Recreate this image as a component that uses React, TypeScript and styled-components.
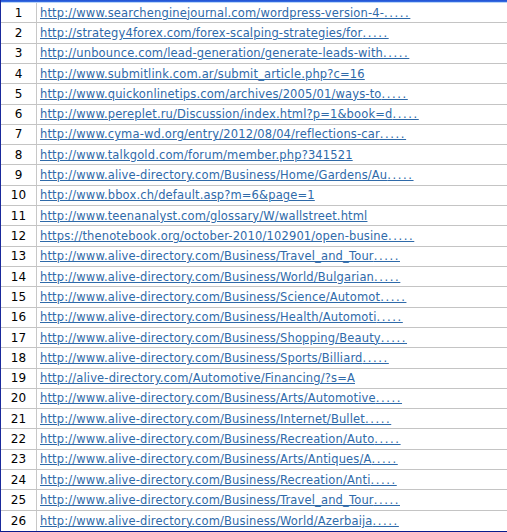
import styled, { createGlobalStyle } from "styled-components";

const LINKS = [
  "http://www.searchenginejournal.com/wordpress-version-4-.....",
  "http://strategy4forex.com/forex-scalping-strategies/for.....",
  "http://unbounce.com/lead-generation/generate-leads-with.....",
  "http://www.submitlink.com.ar/submit_article.php?c=16",
  "http://www.quickonlinetips.com/archives/2005/01/ways-to.....",
  "http://www.pereplet.ru/Discussion/index.html?p=1&book=d.....",
  "http://www.cyma-wd.org/entry/2012/08/04/reflections-car.....",
  "http://www.talkgold.com/forum/member.php?341521",
  "http://www.alive-directory.com/Business/Home/Gardens/Au.....",
  "http://www.bbox.ch/default.asp?m=6&page=1",
  "http://www.teenanalyst.com/glossary/W/wallstreet.html",
  "https://thenotebook.org/october-2010/102901/open-busine.....",
  "http://www.alive-directory.com/Business/Travel_and_Tour.....",
  "http://www.alive-directory.com/Business/World/Bulgarian.....",
  "http://www.alive-directory.com/Business/Science/Automot.....",
  "http://www.alive-directory.com/Business/Health/Automoti.....",
  "http://www.alive-directory.com/Business/Shopping/Beauty.....",
  "http://www.alive-directory.com/Business/Sports/Billiard.....",
  "http://alive-directory.com/Automotive/Financing/?s=A",
  "http://www.alive-directory.com/Business/Arts/Automotive.....",
  "http://www.alive-directory.com/Business/Internet/Bullet.....",
  "http://www.alive-directory.com/Business/Recreation/Auto.....",
  "http://www.alive-directory.com/Business/Arts/Antiques/A.....",
  "http://www.alive-directory.com/Business/Recreation/Anti.....",
  "http://www.alive-directory.com/Business/Travel_and_Tour.....",
  "http://www.alive-directory.com/Business/World/Azerbaija.....",
];

const splitDots = (url: string) =>
  url.endsWith(".....") ? [url.slice(0, -5), "....."] : [url, ""];

export default function App() {
  return (
    <>
      <GlobalStyle />
      <Frame>
        <TopEdge />
        <Rows>
          {LINKS.map((url, i) => {
            const [base, dots] = splitDots(url);
            return (
              <Row key={i} $last={i === LINKS.length - 1}>
                <Num>{i + 1}</Num>
                <Cell>
                  <Link href="#" onClick={(e) => e.preventDefault()}>
                    {base}
                    {dots && <Dots>{dots}</Dots>}
                  </Link>
                </Cell>
              </Row>
            );
          })}
        </Rows>
      </Frame>
    </>
  );
}

const GlobalStyle = createGlobalStyle`
  html, body {
    margin: 0;
    padding: 0;
    background: #ffffff;
  }
`;

const Frame = styled.div`
  width: 507px;
  height: 532px;
  box-sizing: border-box;
  border-left: 1px solid #1a2a9c;
  border-bottom: 1px solid #0a1a8c;
  display: flex;
  flex-direction: column;
  overflow: hidden;
  font-family: "DejaVu Sans", Verdana, sans-serif;
`;

const TopEdge = styled.div`
  height: 3px;
  flex: none;
  background: linear-gradient(#1f4fd0 0, #3a72e6 2px, #b9d4f7 2px);
`;

const Rows = styled.div`
  flex: 1;
  display: grid;
  grid-template-rows: repeat(26, 1fr);
`;

const Row = styled.div<{ $last: boolean }>`
  display: grid;
  grid-template-columns: 36px 1fr;
  border-bottom: ${(p) => (p.$last ? "none" : "1px solid #c4c4c4")};
  min-height: 0;
`;

const Num = styled.div`
  display: flex;
  align-items: center;
  justify-content: center;
  border-right: 1px solid #c8c8c8;
  font-size: 12px;
  color: #000;
`;

const Cell = styled.div`
  display: flex;
  align-items: center;
  padding-left: 3px;
  white-space: nowrap;
  overflow: hidden;
`;

const Link = styled.a`
  font-size: 11.5px;
  letter-spacing: 0.15px;
  color: #2f6aa9;
  text-decoration: underline;
`;

const Dots = styled.span`
  letter-spacing: 1.6px;
`;
